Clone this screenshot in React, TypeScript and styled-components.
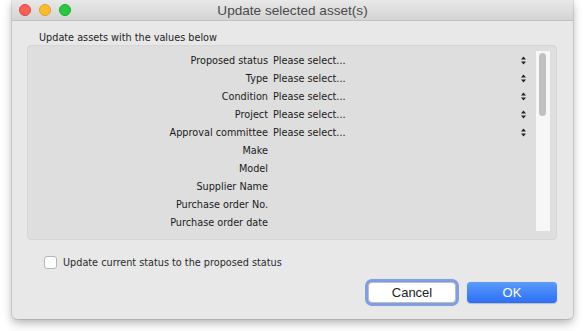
import React from "react";
import styled, { createGlobalStyle } from "styled-components";

const Global = createGlobalStyle`
  html, body { margin: 0; padding: 0; background: #ffffff; }
  body { font-family: "DejaVu Sans", "Liberation Sans", sans-serif; }
  * { box-sizing: border-box; }
`;

const Stage = styled.div`
  width: 585px;
  height: 331px;
  padding-left: 12px;
  overflow: hidden;
`;

const Window = styled.div`
  width: 561px;
  height: 319px;
  background: #e8e8e8;
  border-radius: 0 0 5px 5px;
  box-shadow: 0 4px 10px rgba(0, 0, 0, 0.3), 0 0 0 1px rgba(0, 0, 0, 0.1);
  display: flex;
  flex-direction: column;
`;

const TitleBar = styled.div`
  height: 21px;
  background: linear-gradient(#e8e8e8, #d4d4d4);
  border-bottom: 1px solid #c2c2c2;
  display: flex;
  align-items: center;
  position: relative;
`;

const Lights = styled.div`
  display: flex;
  gap: 8px;
  padding-left: 7px;
`;

const Light = styled.span<{ $c: string; $b: string }>`
  width: 12px;
  height: 12px;
  border-radius: 50%;
  background: ${(p) => p.$c};
  border: 0.5px solid ${(p) => p.$b};
`;

const Title = styled.div`
  position: absolute;
  left: 0;
  right: 0;
  text-align: center;
  font-family: "Liberation Sans", Arial, sans-serif;
  font-size: 13.6px;
  color: #4a4a4a;
  pointer-events: none;
`;

const Body = styled.div`
  flex: 1;
  display: flex;
  flex-direction: column;
  padding: 10px 15px 0 15px;
`;

const SectionLabel = styled.div`
  font-size: 9.7px;
  color: #1e1e1e;
  padding-left: 12px;
  height: 13px;
  line-height: 13px;
`;

const Panel = styled.div`
  margin-top: 1px;
  width: 530px;
  height: 195px;
  background: #dedede;
  border: 1px solid #d6d6d6;
  border-radius: 4px;
  display: flex;
  padding: 5px 6px 8px 0;
`;

const List = styled.div`
  flex: 1;
  display: flex;
  flex-direction: column;
`;

const Row = styled.div`
  display: grid;
  grid-template-columns: 240px 1fr 14px;
  column-gap: 5px;
  height: 18px;
  align-items: center;
  font-size: 9.7px;
  color: #1a1a1a;
`;

const Label = styled.div`
  text-align: right;
  white-space: nowrap;
`;

const Value = styled.div`
  white-space: nowrap;
`;

const Stepper = styled.svg`
  display: block;
  margin-left: 1px;
`;

const Track = styled.div`
  width: 14px;
  height: 180px;
  background: #f7f7f7;
  margin-left: 2px;
  padding: 2px 3px;
`;

const Thumb = styled.div`
  width: 7px;
  height: 63px;
  border-radius: 4px;
  background: #c1c1c1;
`;

const CheckRow = styled.label`
  display: flex;
  align-items: center;
  gap: 6px;
  margin-top: 16px;
  padding-left: 17px;
  font-size: 9.7px;
  color: #2a2a2a;
`;

const Box = styled.span`
  width: 13px;
  height: 13px;
  border-radius: 3px;
  background: #ffffff;
  border: 1px solid #b4b4b4;
`;

const Buttons = styled.div`
  display: flex;
  justify-content: flex-end;
  gap: 9px;
  margin-top: 13px;
`;

const Button = styled.button<{ $primary?: boolean }>`
  font-family: "Liberation Sans", Arial, sans-serif;
  font-size: 13px;
  height: 21px;
  width: ${(p) => (p.$primary ? "90px" : "88px")};
  border-radius: 4px;
  padding: 0;
  margin: ${(p) => (p.$primary ? "0 1px 0 0" : "0 2px")};
  color: ${(p) => (p.$primary ? "#ffffff" : "#222222")};
  border: ${(p) => (p.$primary ? "none" : "0.5px solid #bdbdbd")};
  background: ${(p) =>
    p.$primary ? "linear-gradient(#5a9bfb, #2c6ff6)" : "#ffffff"};
  box-shadow: ${(p) =>
    p.$primary ? "0 0.5px 1px rgba(0,0,0,0.2)" : "0 0 0 3px #7f9ee6"};
`;

const rows: { label: string; select?: boolean }[] = [
  { label: "Proposed status", select: true },
  { label: "Type", select: true },
  { label: "Condition", select: true },
  { label: "Project", select: true },
  { label: "Approval committee", select: true },
  { label: "Make" },
  { label: "Model" },
  { label: "Supplier Name" },
  { label: "Purchase order No." },
  { label: "Purchase order date" },
];

const Arrows = () => (
  <Stepper width="5" height="9" viewBox="0 0 5 9">
    <path d="M2.5 0.5 L5 3.5 L0 3.5 Z" fill="#222" />
    <path d="M0 5.5 L5 5.5 L2.5 8.5 Z" fill="#222" />
  </Stepper>
);

export default function App() {
  return (
    <Stage>
      <Global />
      <Window>
        <TitleBar>
          <Lights>
            <Light $c="#fc5f57" $b="#e0443e" />
            <Light $c="#fdbc2e" $b="#dea123" />
            <Light $c="#28c840" $b="#1aab29" />
          </Lights>
          <Title>Update selected asset(s)</Title>
        </TitleBar>
        <Body>
          <SectionLabel>Update assets with the values below</SectionLabel>
          <Panel>
            <List>
              {rows.map((r) => (
                <Row key={r.label}>
                  <Label>{r.label}</Label>
                  <Value>{r.select ? "Please select..." : ""}</Value>
                  {r.select ? <Arrows /> : <span />}
                </Row>
              ))}
            </List>
            <Track>
              <Thumb />
            </Track>
          </Panel>
          <CheckRow>
            <Box />
            Update current status to the proposed status
          </CheckRow>
          <Buttons>
            <Button>Cancel</Button>
            <Button $primary>OK</Button>
          </Buttons>
        </Body>
      </Window>
    </Stage>
  );
}
